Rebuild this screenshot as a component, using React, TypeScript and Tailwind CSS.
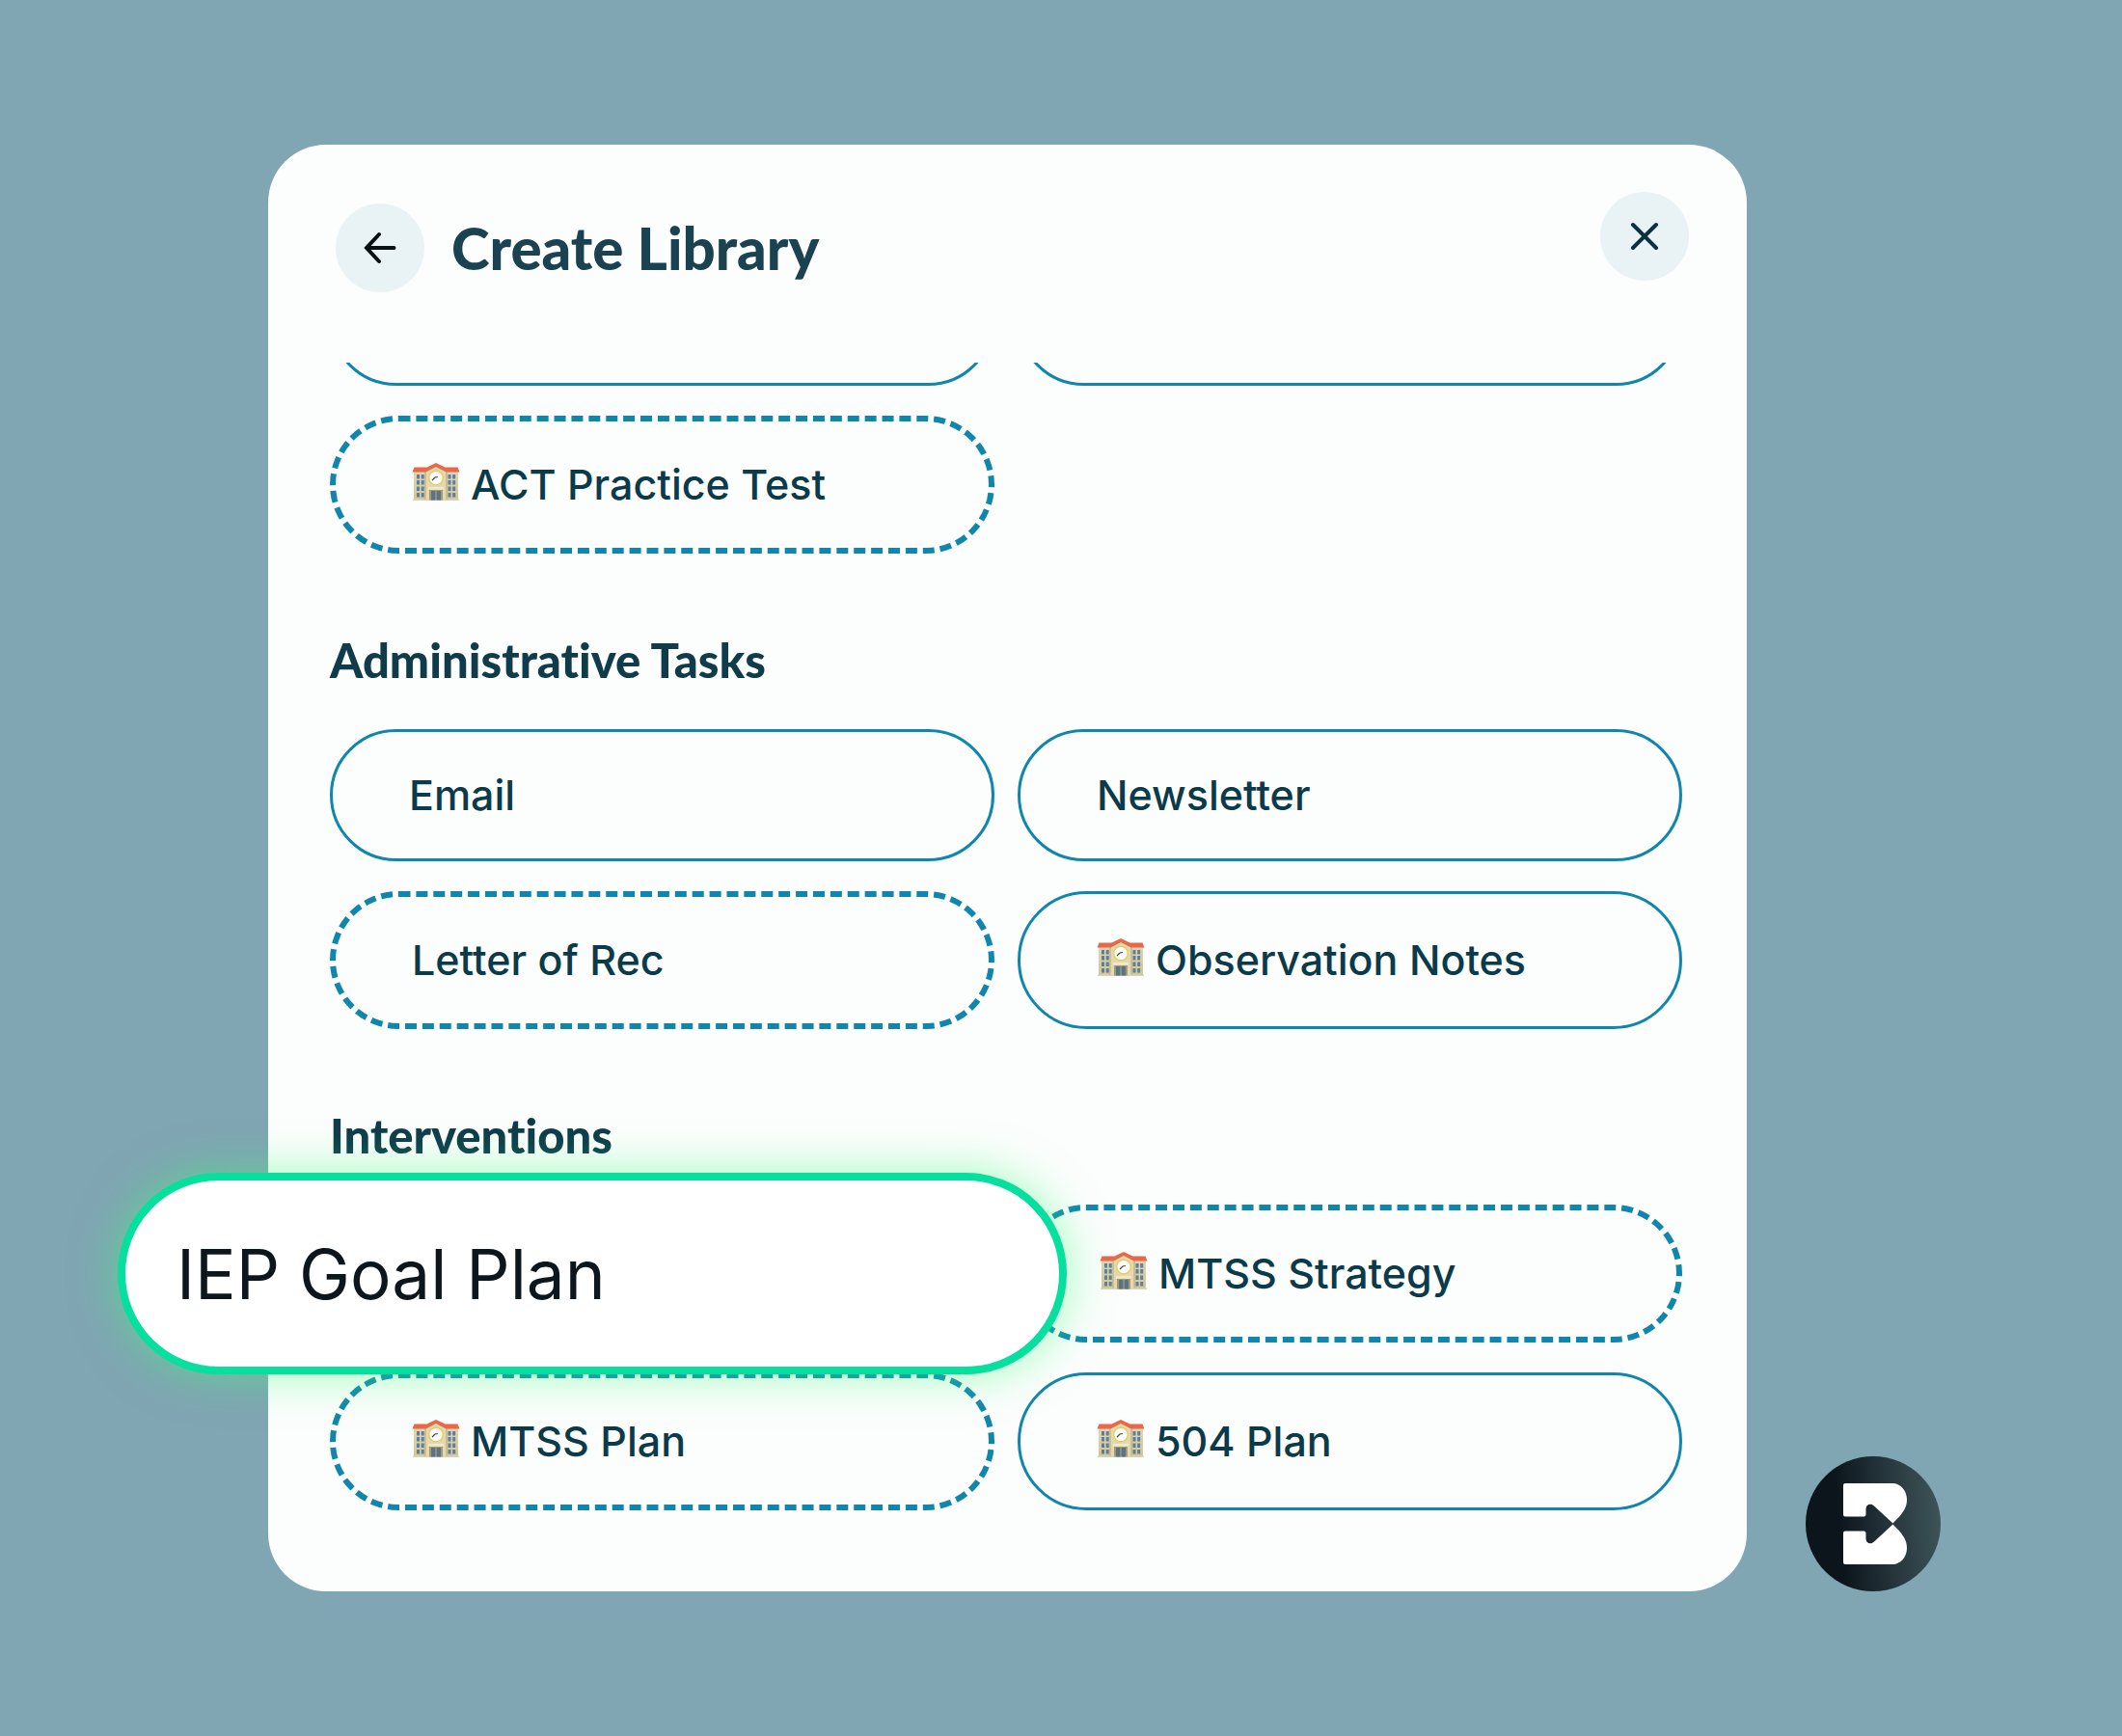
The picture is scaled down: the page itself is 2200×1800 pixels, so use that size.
import type { ReactNode } from 'react';
import { clsx } from 'clsx';

interface Item {
  label: string;
  school?: boolean;
  dashed?: boolean;
}

const ADMIN_TASKS: Item[] = [
  { label: 'Email' },
  { label: 'Newsletter' },
  { label: 'Letter of Rec', dashed: true },
  { label: 'Observation Notes', school: true },
];

function SchoolIcon() {
  return (
    <svg viewBox="3 0 53 40" className="w-[53px] h-10 mb-1.5 flex-shrink-0" aria-hidden="true">
      <defs>
        <linearGradient id="wall" x1="0" y1="0" x2="0" y2="1">
          <stop offset="0" stopColor="#e0d6b2" />
          <stop offset="1" stopColor="#d3c592" />
        </linearGradient>
      </defs>
      <path d="M5 8h46v30.500H5z" fill="url(#wall)" />
      <path d="M17 8L28 2l11 6v31H17z" fill="#e3d8b0" />
      <path d="M17 9v30M39 9v30" stroke="#b9a97a" strokeWidth="1" />
      <path d="M4 37.500h48v1.500H4z" fill="#d9d3bd" />
      <path d="M5.500 4.500h13L28 0l9.500 4.500h13L52.500 9.500H38.500L28 4 17.500 9.500H3.500z" fill="#e8694a" />
      {[12, 18, 24.500, 31].map(y => (
        <g key={y} fill="#5d7f9f">
          <rect x="8" y={y} width="3" height="4.500" />
          <rect x="12.700" y={y} width="3" height="4.500" />
          <rect x="40.500" y={y} width="3" height="4.500" />
          <rect x="45.200" y={y} width="3" height="4.500" />
        </g>
      ))}
      <circle cx="28" cy="15.500" r="7.300" fill="#fefefe" stroke="#e3cf5c" strokeWidth="1.400" />
      <path d="M24 18l3-3 3-.500" fill="none" stroke="#444" strokeWidth="1.200" />
      <path d="M20 25h16v2.500H20z" fill="#f1e9cc" />
      <path d="M21 28h14v10.500H21z" fill="#a89a6c" />
      <path d="M23 29h4.300v9.500H23zM28.700 29H33v9.500h-4.300z" fill="#56748c" />
    </svg>
  );
}

function Pill({ label, school, dashed }: Item) {
  return (
    <button
      type="button"
      className={clsx(
        'flex items-center gap-2 w-full px-[79px] py-10 rounded-full border-[#1186ac] text-left text-[43px] leading-[51px] font-medium text-[#0b3a4a]',
        dashed ? 'border-6 border-dashed' : 'border-3',
      )}
    >
      {school && <SchoolIcon />}
      <span className="whitespace-nowrap">{label}</span>
    </button>
  );
}

function Section({ title, children }: { title: string; children: ReactNode }) {
  return (
    <section className="pt-20">
      <h2 className="mb-[42px] font-[Lato,sans-serif] text-[49px] leading-[60px] font-black text-[#0f3b4b] [font-variant-ligatures:none]">{title}</h2>
      <div className="grid grid-cols-2 gap-x-6 gap-y-[31px]">{children}</div>
    </section>
  );
}

function BrandBadge() {
  return (
    <svg viewBox="0 0 140 140" className="w-[140px] h-[140px] flex-shrink-0" role="img" aria-label="Brand logo">
      <defs>
        <linearGradient id="badge" x1="0" y1="0.550" x2="1" y2="0.450">
          <stop offset="0.250" stopColor="#0c151c" />
          <stop offset="0.600" stopColor="#24343a" />
          <stop offset="1" stopColor="#3d5459" />
        </linearGradient>
      </defs>
      <circle cx="70" cy="70" r="70" fill="url(#badge)" />
      <path
        d="M41 28H90C99 28 105 36 105 45C105 54 100 60 90.500 69.500L71 51.500C67.500 48 62.500 50 62.500 54.500V60.500Q62.500 62.500 60.500 62.500H41Q39 62.500 39 60.500V30Q39 28 41 28Z"
        fill="#fff"
      />
      <path
        d="M41 112H90C99 112 105 104 105 95C105 86 100 80 90.500 70.500L71 88.500C67.500 92 62.500 90 62.500 85.500V79.500Q62.500 77.500 60.500 77.500H41Q39 77.500 39 79.500V110Q39 112 41 112Z"
        fill="#fff"
      />
    </svg>
  );
}

export default function App() {
  return (
    <div className="min-h-screen flex items-end gap-[61px] pl-[278px] pr-[188px] py-[150px] bg-[#80a5b3] font-[Inter,sans-serif]">
      <main className="flex-1 min-w-0 pt-[49px] pb-[84px] rounded-[60px] bg-[#fcfdfd]">
        <header className="flex items-start justify-between pl-[70px] pr-[60px]">
          <div className="flex items-center gap-7 pt-3">
            <button type="button" aria-label="Back" className="flex items-center justify-center w-[92px] h-[92px] rounded-full bg-[#e9f2f5]">
              <svg viewBox="0 0 36 36" className="w-9 h-9" fill="none" stroke="#0a0f12" strokeWidth="4" strokeLinecap="round">
                <path d="M32.500 18H5M17 4L4 18l13 14" />
              </svg>
            </button>
            <h1 className="font-[Lato,sans-serif] text-[60px] leading-[64px] font-black text-[#1a4250]">Create Library</h1>
          </div>
          <button type="button" aria-label="Close" className="flex items-center justify-center w-[92px] h-[92px] rounded-full bg-[#e9f2f5]">
            <svg viewBox="0 0 30 30" className="w-[30px] h-[30px]" fill="none" stroke="#0b3040" strokeWidth="4" strokeLinecap="round">
              <path d="M3 3l24 24M27 3L3 27" />
            </svg>
          </button>
        </header>

        <div className="mt-[73px] pl-16 pr-[67px]">
          {/* row scrolled under the header */}
          <div className="overflow-hidden">
            <div className="grid grid-cols-2 gap-x-6 -mt-[113px]">
              <div className="h-[137px] rounded-full border-3 border-[#1186ac]" />
              <div className="h-[137px] rounded-full border-3 border-[#1186ac]" />
            </div>
          </div>
          <div className="grid grid-cols-2 gap-x-6 mt-[31px]">
            <Pill label="ACT Practice Test" school dashed />
          </div>

          <Section title="Administrative Tasks">
            {ADMIN_TASKS.map(item => <Pill key={item.label} {...item} />)}
          </Section>

          <Section title="Interventions">
            <div className="relative">
              <button
                type="button"
                className="absolute -left-[220px] -right-[75px] -inset-y-[33px] flex items-center px-[53px] rounded-full border-8 border-[#06df9d] bg-white text-[71px] leading-[88px] text-[#0b161d] shadow-[0_0_48px_rgba(60,255,120,0.5)]"
              >
                IEP Goal Plan
              </button>
            </div>
            <Pill label="MTSS Strategy" school dashed />
            <Pill label="MTSS Plan" school dashed />
            <Pill label="504 Plan" school />
          </Section>
        </div>
      </main>
      <BrandBadge />
    </div>
  );
}
